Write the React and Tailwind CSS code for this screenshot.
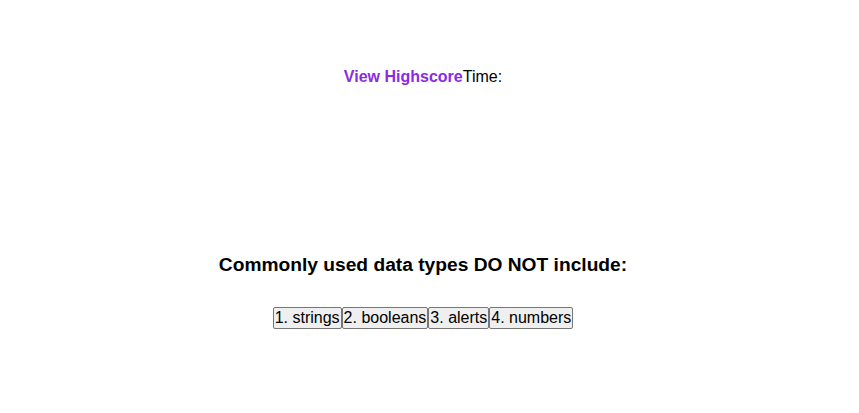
import React from 'react';

const choices = ['1. strings', '2. booleans', '3. alerts', '4. numbers'];

function App() {
  return (
    <div className="min-h-[413px] bg-white pr-[13px] text-black" style={{ fontFamily: '"Liberation Sans", Arial, sans-serif' }}>
      <header className="flex justify-center pt-[68px] text-[16px] leading-[18px]">
        <a className="font-bold text-[#8a2be2]">View Highscore</a>
        <span>Time:</span>
      </header>
      <main className="mt-[167px] flex flex-col items-center">
        <h2 className="text-[19.2px] font-bold leading-[23px]">Commonly used data types DO NOT include:</h2>
        <div className="mt-[31px] flex">
          {choices.map((c) => (
            <button
              key={c}
              className="border border-[#767676] bg-[#efefef] px-[1px] text-[16px] leading-[18px] rounded-[2px] py-[1px]"
            >
              {c}
            </button>
          ))}
        </div>
      </main>
    </div>
  );
}

export default App;
